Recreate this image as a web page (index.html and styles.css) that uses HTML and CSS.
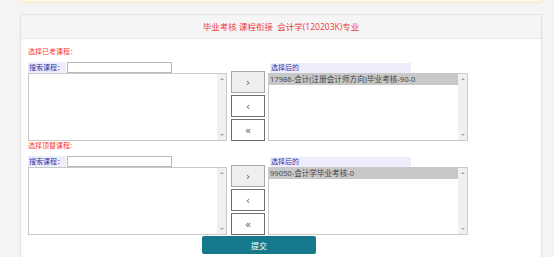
FILE: index.html
```html
<!DOCTYPE html>
<html lang="zh-CN">
<head>
  <meta charset="UTF-8" />
  <meta name="viewport" content="width=device-width, initial-scale=1" />
  <title>课程衔接</title>
  <link rel="stylesheet" href="styles.css">
</head>
<body>
  <div class="notice"></div>

  <div class="panel">
    <div class="panel-head">毕业考核 课程衔接&nbsp;&nbsp;会计学(120203K)专业</div>
    <div class="panel-body">

      <!-- 已考课程 -->
      <div class="sec-title">选择已考课程：</div>
      <div class="picker">
        <div class="col-left">
          <div class="search">
            <span class="search-label">搜索课程：</span>
            <input class="search-input" type="text">
          </div>
          <div class="listbox">
            <div class="options"></div>
            <div class="scroll"><span class="up"></span><span class="down"></span></div>
          </div>
        </div>
        <div class="moves">
          <button class="move-btn first">›</button>
          <button class="move-btn">‹</button>
          <button class="move-btn">«</button>
        </div>
        <div class="col-right">
          <div class="picked-label">选择后的</div>
          <div class="listbox">
            <div class="options">
              <div class="opt selected">17986-会计(注册会计师方向)毕业考核-90-0</div>
            </div>
            <div class="scroll"><span class="up"></span><span class="down"></span></div>
          </div>
        </div>
      </div>

      <!-- 顶替课程 -->
      <div class="sec-title">选择顶替课程:</div>
      <div class="picker">
        <div class="col-left">
          <div class="search">
            <span class="search-label">搜索课程：</span>
            <input class="search-input" type="text">
          </div>
          <div class="listbox">
            <div class="options"></div>
            <div class="scroll"><span class="up"></span><span class="down"></span></div>
          </div>
        </div>
        <div class="moves">
          <button class="move-btn first">›</button>
          <button class="move-btn">‹</button>
          <button class="move-btn">«</button>
        </div>
        <div class="col-right">
          <div class="picked-label">选择后的</div>
          <div class="listbox">
            <div class="options">
              <div class="opt selected">99050-会计学毕业考核-0</div>
            </div>
            <div class="scroll"><span class="up"></span><span class="down"></span></div>
          </div>
        </div>
      </div>

      <div class="actions">
        <button class="submit">提交</button>
      </div>
    </div>
  </div>
</body>
</html>
```

FILE: styles.css
```css
body {
  margin: 0;
  padding: 0;
  background: #f4f4f4;
  font-family: "Open Sans", "Noto Sans CJK SC", sans-serif;
  font-size: 7px;
  color: #333;
}

.notice {
  margin: 0 12px 0 20px;
  height: 2px;
  background: #fcf8e6;
  border: 1px solid #f1e8c8;
  border-top: none;
  border-radius: 0 0 2px 2px;
}

.panel {
  margin: 11px 12px 0 20px;
  background: #fff;
  border: 1px solid #e2e2e2;
  border-radius: 2px;
  box-shadow: 0 1px 2px rgba(0, 0, 0, 0.05);
}

.panel-head {
  height: 23px;
  line-height: 23px;
  background: #f5f5f5;
  border-bottom: 1px solid #e6e6e6;
  text-align: center;
  font-size: 8.5px;
  color: #ee3a3f;
}

.panel-body {
  padding: 8px 0 30px 7px;
}

.sec-title {
  height: 10px;
  line-height: 10px;
  color: #ff3a3a;
}

.picker {
  display: flex;
  align-items: flex-end;
  margin-top: 5px;
}

.col-left {
  width: 199px;
}

.search {
  display: flex;
  height: 11px;
}

.search-label {
  width: 37px;
  padding-left: 1px;
  line-height: 11px;
  background: #ededfb;
  color: #3434a0;
}

.search-input {
  box-sizing: border-box;
  width: 105px;
  height: 11px;
  margin: 0 0 0 1px;
  padding: 0;
  border: 1px solid #b9b9b9;
  background: #fff;
}

.listbox {
  box-sizing: border-box;
  display: flex;
  height: 68px;
  border: 1px solid #c9c9c9;
  background: #fff;
}

.options {
  flex: 1;
}

.opt {
  height: 11px;
  line-height: 11px;
  padding-left: 1px;
  font-size: 7.6px;
  color: #444;
}

.opt.selected {
  background: #c8c8c8;
}

.scroll {
  width: 9px;
  display: flex;
  flex-direction: column;
  justify-content: space-between;
  align-items: center;
  padding: 4px 0;
  background: #f0f0f0;
}

.scroll span {
  width: 0;
  height: 0;
  border-left: 2px solid transparent;
  border-right: 2px solid transparent;
}

.scroll .up {
  border-bottom: 2px solid #a3a3a3;
}

.scroll .down {
  border-top: 2px solid #a3a3a3;
}

.moves {
  display: flex;
  flex-direction: column;
  gap: 2px;
  margin-left: 4px;
}

.move-btn {
  box-sizing: border-box;
  width: 34px;
  height: 22px;
  padding: 0;
  border: 1px solid #6f6f6f;
  background: #fff;
  font-family: "DejaVu Sans", sans-serif;
  font-size: 10px;
  color: #555;
  cursor: pointer;
}

.move-btn.first {
  background: #efefef;
  border-color: #a9a9a9;
}

.col-right {
  width: 200px;
  margin-left: 3px;
}

.picked-label {
  width: 140px;
  height: 10px;
  line-height: 10px;
  margin: 0 0 0 2px;
  padding-left: 1px;
  background: #ededfb;
  color: #3434a0;
}

.actions {
  padding-left: 174px;
  margin-top: 1px;
}

.submit {
  width: 114px;
  height: 18px;
  padding: 0;
  border: none;
  border-radius: 2px;
  background: #16798b;
  color: #fff;
  font-family: "Noto Sans CJK SC", sans-serif;
  font-size: 8px;
  cursor: pointer;
}
```
